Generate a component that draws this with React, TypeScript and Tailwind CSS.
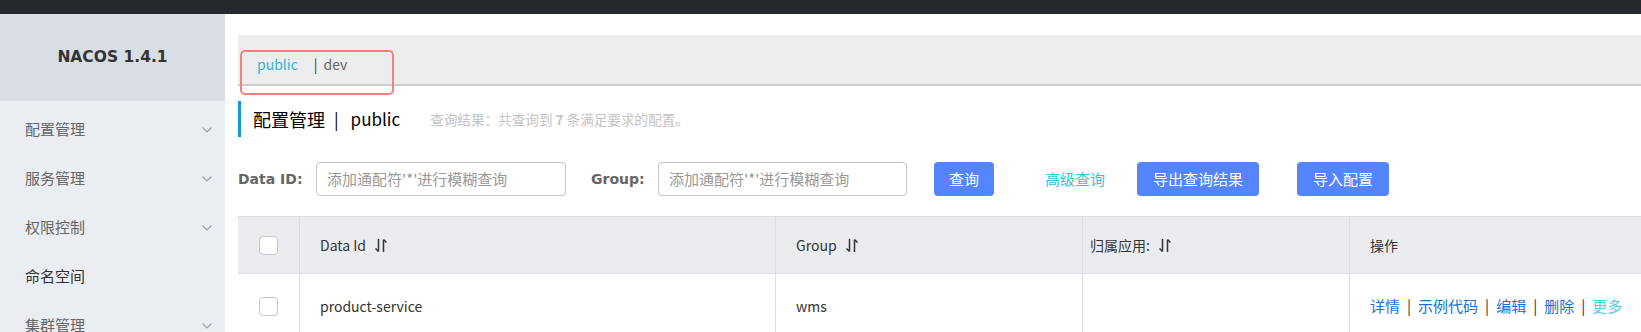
import React from 'react';

const MENU = [
  { label: '配置管理', arrow: true },
  { label: '服务管理', arrow: true },
  { label: '权限控制', arrow: true },
  { label: '命名空间', arrow: false },
  { label: '集群管理', arrow: true },
];

function Chevron() {
  return (
    <svg width="10" height="6" viewBox="0 0 10 6" className="mr-[13px]">
      <polyline points="0.5,0.5 5,5 9.5,0.5" fill="none" stroke="#9aa0a8" strokeWidth="1.1" />
    </svg>
  );
}

function SortIcon() {
  return (
    <svg width="12" height="15" viewBox="0 0 12 15" className="ml-[9px]">
      <path d="M3.5 1 V13.5 M0.5 10.5 L3.5 13.5" fill="none" stroke="#333" strokeWidth="1.5" />
      <path d="M8.5 14 V1.5 M8.5 1.5 L11.5 4.5" fill="none" stroke="#333" strokeWidth="1.5" />
    </svg>
  );
}

function Checkbox() {
  return <div className="w-[19px] h-[19px] rounded-[4px] border border-[#c4c6cf] bg-white" />;
}

export default function App() {
  const font = "font-['Noto_Sans_CJK_SC','Noto_Sans',sans-serif]";
  const latinBold = "font-['DejaVu_Sans','Noto_Sans_CJK_SC',sans-serif] font-bold";

  return (
    <div className={`w-[1641px] h-[332px] overflow-hidden flex flex-col bg-white ${font}`}>
      {/* top bar */}
      <div className="h-[14px] bg-[#252a2f] shrink-0" />

      <div className="flex flex-1 min-h-0">
        {/* sidebar */}
        <div className="w-[225px] shrink-0 bg-[#eaedf1] flex flex-col">
          <div className="h-[87px] shrink-0 bg-[#d9dee4] flex items-center justify-center">
            <span className={`text-[15.5px] text-[#333] ${latinBold}`}>NACOS 1.4.1</span>
          </div>
          <div className="pt-[4px] shrink-0">
            {MENU.map(m => (
              <div key={m.label} className="h-[49px] flex items-center justify-between pl-[25px]">
                <span className={`text-[15px] ${m.arrow ? 'text-[#666]' : 'text-[#333]'}`}>{m.label}</span>
                {m.arrow && <Chevron />}
              </div>
            ))}
          </div>
        </div>

        {/* main */}
        <div className="flex-1 min-w-0 pl-[13px]">
          {/* namespace bar */}
          <div className="relative mt-[21px] h-[51px] bg-[#ededed] border-b-2 border-[#cccccc] flex items-center pl-[19px] text-[14px] pt-[9px]">
            <span className="text-[#33b5d8]">public</span>
            <span className="ml-[16px] text-[#333]">|</span>
            <span className="ml-[6px] text-[#666]">dev</span>
            <div className="absolute left-[2px] top-[15px] w-[154px] h-[45px] border-2 border-[#f2837c] rounded-[5px]" />
          </div>

          {/* title */}
          <div className="mt-[15px] h-[36px] flex items-center border-l-[3px] border-[#0e9bd8] pl-[12px]">
            <span className="text-[18px] text-black">配置管理</span>
            <span className="text-[17px] text-black ml-[9px] mr-[12px]">|</span>
            <span className="text-[17px] text-black">public</span>
            <span className="ml-[30px] text-[13.6px] text-[#c4c4c4]">
              查询结果：共查询到 <b className="font-bold">7</b> 条满足要求的配置。
            </span>
          </div>

          {/* search row */}
          <div className="mt-[25px] h-[34px] flex items-center text-[15px]">
            <span className={`w-[78px] text-[14px] text-[#666] ${latinBold}`}>Data ID:</span>
            <div className="w-[250px] h-[34px] border border-[#c4c6cf] rounded-[4px] flex items-center pl-[10px] text-[#999]">
              添加通配符'*'进行模糊查询
            </div>
            <span className={`ml-[25px] w-[67px] text-[14px] text-[#666] ${latinBold}`}>Group:</span>
            <div className="w-[249px] h-[34px] border border-[#c4c6cf] rounded-[4px] flex items-center pl-[10px] text-[#999]">
              添加通配符'*'进行模糊查询
            </div>
            <button className="ml-[27px] w-[60px] h-[34px] rounded-[4px] bg-[#5584ff] text-white">查询</button>
            <span className="ml-[51px] text-[#36c2dc]">高级查询</span>
            <button className="ml-[32px] w-[122px] h-[34px] rounded-[4px] bg-[#5584ff] text-white">导出查询结果</button>
            <button className="ml-[38px] w-[92px] h-[34px] rounded-[4px] bg-[#5584ff] text-white">导入配置</button>
          </div>

          {/* table */}
          <div className="mt-[20px] border-t border-[#dcdee3] text-[14px] text-[#333]">
            <div className="h-[57px] bg-[#ebecf0] flex border-b border-[#dcdee3]">
              <div className="w-[62px] flex items-center justify-center border-r border-[#dcdee3]"><Checkbox /></div>
              <div className="w-[476px] flex items-center pl-[20px] border-r border-[#dcdee3]">Data Id<SortIcon /></div>
              <div className="w-[307px] flex items-center pl-[20px] border-r border-[#dcdee3]">Group<SortIcon /></div>
              <div className="w-[267px] flex items-center pl-[7px] border-r border-[#dcdee3]">归属应用:<SortIcon /></div>
              <div className="flex-1 flex items-center pl-[20px]">操作</div>
            </div>
            <div className="h-[64px] flex">
              <div className="w-[62px] flex items-center justify-center border-r border-[#dcdee3]"><Checkbox /></div>
              <div className="w-[476px] flex items-center pl-[20px] border-r border-[#dcdee3]">product-service</div>
              <div className="w-[307px] flex items-center pl-[20px] border-r border-[#dcdee3]">wms</div>
              <div className="w-[267px] border-r border-[#dcdee3]" />
              <div className="flex-1 flex items-center pl-[20px] text-[15px]">
                <span className="text-[#1a6fd6]">详情</span>
                <span className="mx-[7px]">|</span>
                <span className="text-[#1a6fd6]">示例代码</span>
                <span className="mx-[7px]">|</span>
                <span className="text-[#1a6fd6]">编辑</span>
                <span className="mx-[7px]">|</span>
                <span className="text-[#1a6fd6]">删除</span>
                <span className="mx-[7px]">|</span>
                <span className="text-[#4fcfe6]">更多</span>
              </div>
            </div>
          </div>
        </div>
      </div>
    </div>
  );
}
